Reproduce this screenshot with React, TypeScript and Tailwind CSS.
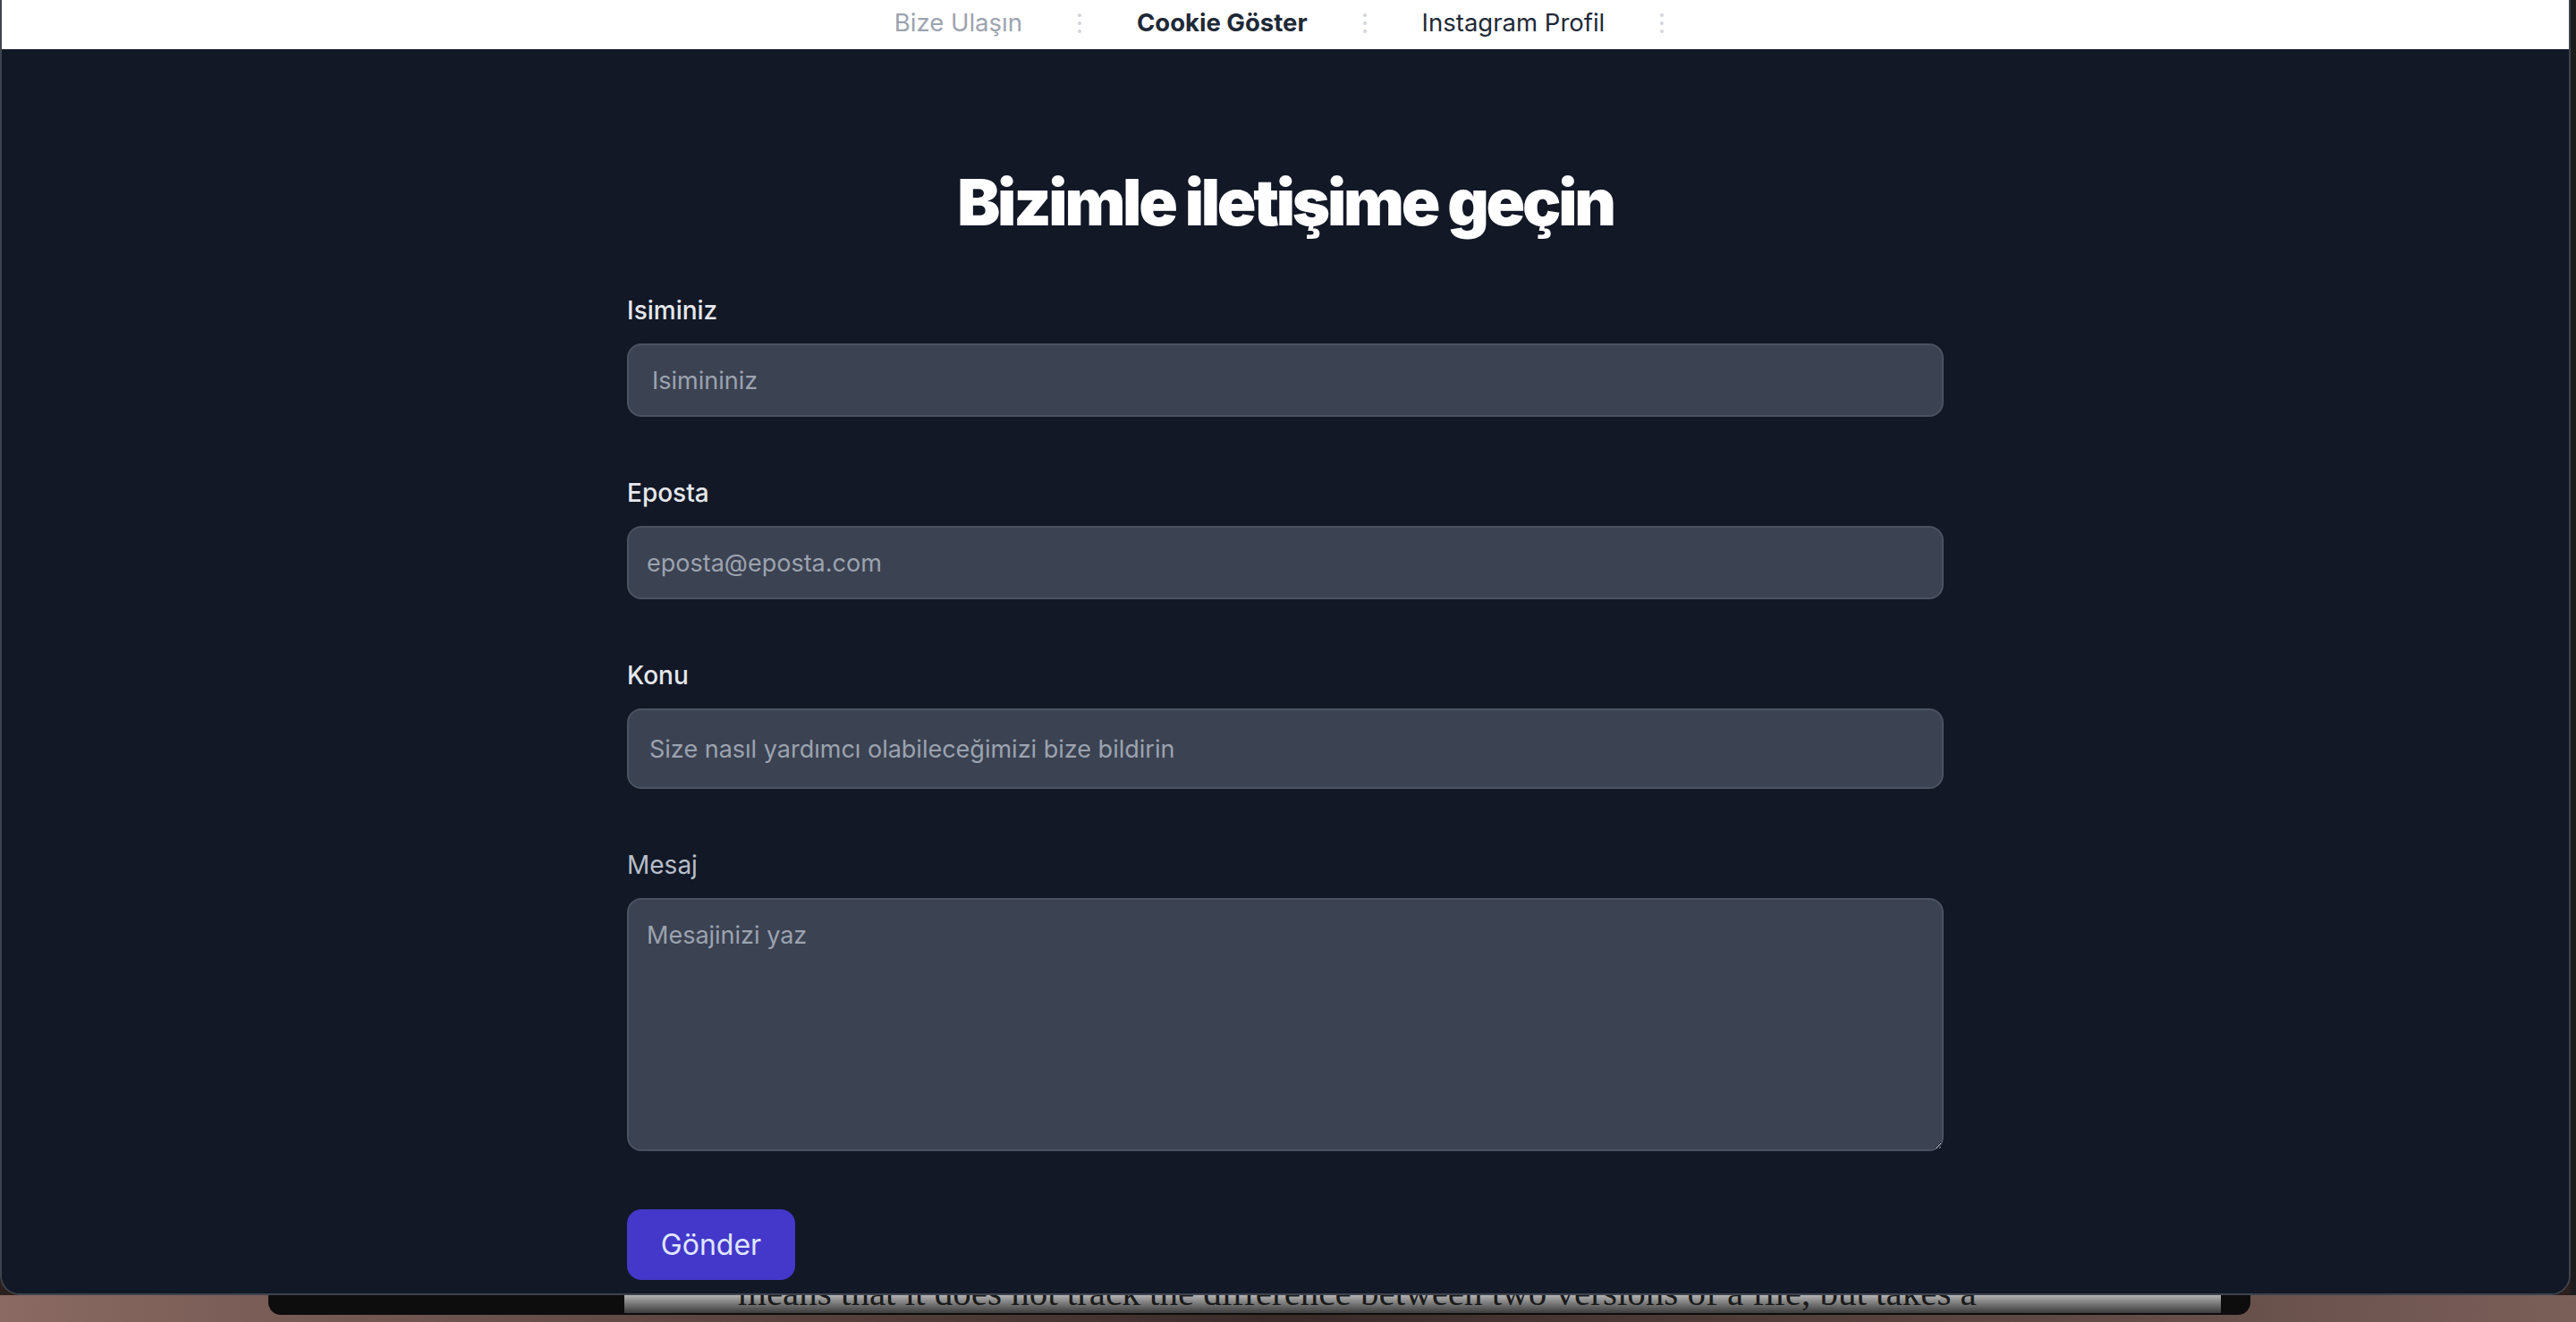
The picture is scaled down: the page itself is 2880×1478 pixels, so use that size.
import React from "react";

const navItems = [
  { label: "Bize Ulaşın", className: "text-[#9ca3af] font-normal" },
  { label: "Cookie Göster", className: "text-[#1f2937] font-bold" },
  { label: "Instagram Profil", className: "text-[#1f2937] font-normal" },
];

const fields = [
  { label: "Isiminiz", placeholder: "Isimininiz", h: "h-[82px]", px: "pl-[26px]" },
  { label: "Eposta", placeholder: "eposta@eposta.com", h: "h-[82px]", px: "pl-[20px]" },
  { label: "Konu", placeholder: "Size nasıl yardımcı olabileceğimizi bize bildirin", h: "h-[90px]", px: "pl-[23px]" },
];

const Dots = () => (
  <svg width="6" height="26" viewBox="0 0 6 26" className="mx-[61px]">
    <circle cx="3" cy="4" r="2" fill="#d1d5db" />
    <circle cx="3" cy="13" r="2" fill="#d1d5db" />
    <circle cx="3" cy="22" r="2" fill="#d1d5db" />
  </svg>
);

const App = () => {
  return (
    <div className="flex h-screen w-full flex-col overflow-hidden bg-[#2a1f1d] font-['Inter',sans-serif]">
      <div className="flex h-[1448px] shrink-0">
        <div className="flex flex-1 flex-col overflow-hidden rounded-b-[22px] border-b-2 border-l-2 border-r-2 border-[#3d434f]">
          <nav className="flex h-[55px] shrink-0 items-center justify-center bg-white pb-[4px] pl-[48px] text-[27.5px]">
            {navItems.map((item) => (
              <div key={item.label} className="flex items-center">
                <span className={item.className}>{item.label}</span>
                <Dots />
              </div>
            ))}
          </nav>
          <section className="flex-1 bg-[#121826]">
            <div className="mx-auto w-[1472px] pt-[135px]">
              <h2 className="mb-[65px] text-center text-[72px] leading-none font-black tracking-[-0.045em] text-white">
                Bizimle iletişime geçin
              </h2>
              <form className="flex flex-col gap-[65px]">
                {fields.map((f) => (
                  <div key={f.label}>
                    <label className="mb-[17px] block text-[28px] leading-[40px] font-medium text-[#e5e7eb]">
                      {f.label}
                    </label>
                    <input
                      placeholder={f.placeholder}
                      className={`block w-full rounded-[16px] border-2 border-[#4b5262] bg-[#3b4252] text-[27px] text-white placeholder:text-[#9ca3af] outline-none ${f.h} ${f.px}`}
                    />
                  </div>
                ))}
                <div>
                  <label className="mb-[17px] block text-[28px] leading-[40px] font-normal text-[#b8bec9]">
                    Mesaj
                  </label>
                  <textarea
                    placeholder="Mesajinizi yaz"
                    className="block h-[283px] w-full rounded-[16px] border-2 border-[#4b5262] bg-[#3b4252] px-[20px] py-[20px] text-[27px] leading-[40px] text-white placeholder:text-[#9ca3af] outline-none"
                  />
                </div>
                <div>
                  <button
                    type="button"
                    className="h-[79px] w-[188px] rounded-[16px] bg-[#4338ca] text-[32px] text-[#e0e7ff]"
                  >
                    Gönder
                  </button>
                </div>
              </form>
            </div>
          </section>
        </div>
        <div className="w-[6px] bg-[#1c1c1c]" />
      </div>
      <div className="flex h-[30px] shrink-0 bg-gradient-to-r from-[#8a6a62] via-[#3a2b28] to-[#7a5f58]">
        <div className="ml-[300px] flex h-[22px] w-[2216px] rounded-b-[14px] bg-[#0d0d0d]">
          <div className="ml-[398px] h-[20px] w-[1785px] overflow-hidden bg-gradient-to-b from-[#b3b3b3] to-[#3c3c3c]">
            <p className="-mt-[26px] pl-[127px] font-['Liberation_Serif',serif] text-[41px] leading-[46px] whitespace-nowrap text-[#1a1a1a]">
              means that it does not track the difference between two versions of a file, but takes a
            </p>
          </div>
        </div>
      </div>
    </div>
  );
};

export default App;
